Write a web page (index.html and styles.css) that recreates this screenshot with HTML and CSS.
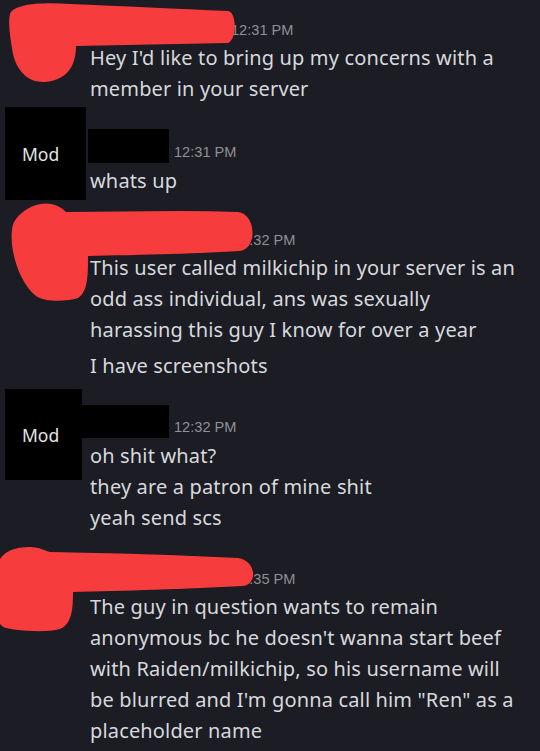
FILE: index.html
```html
<!DOCTYPE html>
<html>
<head>
<title>Direct message</title>
<link rel="stylesheet" href="styles.css">
</head>
<body>
<div class="chat">

  <div class="msg first">
    <div class="side"></div>
    <div class="main">
      <div class="head"><span class="name n1"></span><span class="time">12:31 PM</span></div>
      <div class="text">Hey I'd like to bring up my concerns with a member in your server</div>
    </div>
    <svg class="scribble s1" width="260" height="100" viewBox="0 0 260 100">
      <path d="M10,14 C14,4 40,2 70,4 C120,6 180,9 228,11 C237,12 237,40 228,43 L76,46 C76,62 70,80 45,82 C25,83 14,66 12,48 C10,36 8,22 10,14 Z"/>
    </svg>
  </div>

  <div class="msg mod m2">
    <div class="side"><div class="avatar">Mod</div></div>
    <div class="main">
      <div class="head"><span class="namebox"></span><span class="time">12:31 PM</span></div>
      <div class="text">whats up</div>
    </div>
  </div>

  <div class="msg m3">
    <div class="side"></div>
    <div class="main">
      <div class="head"><span class="name n2"></span><span class="time">12:32 PM</span></div>
      <div class="text">This user called milkichip in your server is an odd ass individual, ans was sexually harassing this guy I know for over a year</div>
      <div class="text next">I have screenshots</div>
    </div>
    <svg class="scribble s2" width="270" height="110" viewBox="0 200 270 110">
      <path d="M14,222 C20,212 30,206 40,204 C52,202 60,206 66,212 C120,212 180,210 238,212 C256,214 258,248 240,251 C190,254 130,255 88,256 C88,275 88,292 78,298 C66,302 45,302 36,296 C22,285 14,262 12,245 C11,235 12,226 14,222 Z"/>
    </svg>
  </div>

  <div class="msg mod m4">
    <div class="side"><div class="avatar">Mod</div></div>
    <div class="main">
      <div class="head"><span class="namebox"></span><span class="time">12:32 PM</span></div>
      <div class="text">oh shit what?</div>
      <div class="text">they are a patron of mine shit</div>
      <div class="text">yeah send scs</div>
    </div>
  </div>

  <div class="msg m5">
    <div class="side"></div>
    <div class="main">
      <div class="head"><span class="name n2"></span><span class="time">12:35 PM</span></div>
      <div class="text">The guy in question wants to remain anonymous bc he doesn't wanna start beef with Raiden/milkichip, so his username will be blurred and I'm gonna call him "Ren" as a placeholder name</div>
    </div>
    <svg class="scribble s3" width="270" height="100" viewBox="0 540 270 100">
      <path d="M0,560 C5,552 15,548 30,548 C40,548 45,552 50,553 C110,554 180,556 238,559 C257,562 258,586 242,587 C190,590 120,592 73,593 C73,610 72,625 60,630 C45,634 15,632 3,628 L0,625 Z"/>
    </svg>
  </div>

</div>
</body>
</html>
```

FILE: styles.css
```css
html, body {margin: 0;padding: 0;background-color: #1b1c24;}
body {font-family: "Noto Sans", "Open Sans", sans-serif;color: #d7d9dd;width: 540px;height: 751px;overflow: hidden;}
.chat {padding-top: 20px;}
.msg {display: flex;position: relative;}
.side {width: 90px;flex: none;}
.main {flex: 1;padding-right: 14px;min-width: 0;}
.head {display: flex;align-items: flex-end;height: 20px;}
.time {font-family: "Liberation Sans", Arial, sans-serif;font-size: 14.6px;line-height: 20px;color: #8e9198;margin-left: 5px;white-space: nowrap;}
.name {display: inline-block;height: 20px;}
.n1 {width: 136px;}
.n2 {width: 138px;}
.text {font-size: 20px;line-height: 31px;letter-spacing: 0.15px;margin-top: 2px;}
.text + .text {margin-top: 0;}
.text.next {margin-top: 5px;}

.avatar {background-color: #000;color: #e4e4e4;margin-left: 5px;display: flex;align-items: center;padding-left: 17px;font-size: 17.5px;box-sizing: border-box;}
.mod .head {height: auto;}
.mod .time {margin-bottom: 1px;}
.namebox {display: block;background-color: #000;}
.mod .text:first-of-type {margin-top: 3px;}

.m2 {margin-top: 3px;}
.m2 .avatar {width: 81px;height: 93px;}
.m2 .main {padding-top: 22px;}
.m2 .namebox {width: 81px;height: 34px;margin-left: -2px;}

.m3 {margin-top: 30px;}

.m4 {margin-top: 8px;}
.m4 .avatar {width: 77px;height: 91px;}
.m4 .main {padding-top: 16px;}
.m4 .namebox {width: 87px;height: 33px;margin-left: -8px;}

.m5 {margin-top: 36px;}

.scribble {position: absolute;left: 0;fill: #f63c3c;}
.s1 {top: -20px;}
.s2 {top: -30px;}
.s3 {top: -30px;}
```
